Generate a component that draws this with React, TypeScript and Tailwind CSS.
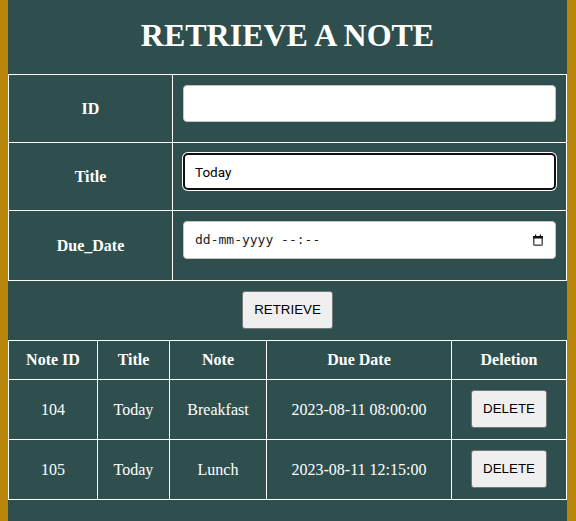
import { useState } from "react";

type Note = {
  id: number;
  title: string;
  note: string;
  dueDate: string;
};

const notes: Note[] = [
  { id: 104, title: "Today", note: "Breakfast", dueDate: "2023-08-11 08:00:00" },
  { id: 105, title: "Today", note: "Lunch", dueDate: "2023-08-11 12:15:00" },
];

const serif = "font-['Liberation_Serif','Times_New_Roman',serif]";
const sans = "font-['Liberation_Sans',Arial,sans-serif]";

const btn = `${sans} h-[38px] px-[11px] bg-[#efefef] border border-[#767676] rounded-[3px] text-[13.33px] text-black leading-none`;

const App = () => {
  const [id, setId] = useState("");
  const [title, setTitle] = useState("Today");

  return (
    <div className="min-h-screen bg-[#b8860b] pl-[8px]">
      <div className={`w-[559px] min-h-[521px] bg-[#2f4f4f] pt-[17px] text-white ${serif}`}>
        {/* Title */}
        <h1 className="h-[37px] mb-[20px] text-center text-[32px] font-bold leading-[37px]">
          RETRIEVE A NOTE
        </h1>

        {/* Form */}
        <table className="w-full table-fixed border-collapse border border-white">
          <colgroup>
            <col className="w-[164px]" />
            <col />
          </colgroup>
          <tbody>
            <tr>
              <td className="border border-white text-center font-bold text-[16px]">ID</td>
              <td className="border border-white pl-[10px] pr-[10px] pt-[10px] pb-[20px]">
                <input
                  value={id}
                  onChange={(e) => setId(e.target.value)}
                  className="block w-full h-[37px] rounded-[4px] border border-[#c4c4c4] bg-white px-[11px] text-[13.5px] text-black font-['Roboto',sans-serif] outline-none"
                />
              </td>
            </tr>
            <tr>
              <td className="border border-white text-center font-bold text-[16px]">Title</td>
              <td className="border border-white pl-[10px] pr-[10px] pt-[10px] pb-[20px]">
                <input
                  value={title}
                  onChange={(e) => setTitle(e.target.value)}
                  className="block w-full h-[37px] rounded-[5px] border-2 border-[#101010] shadow-[0_0_0_1px_white] bg-white px-[10px] text-[13.5px] text-black font-['Roboto',sans-serif] outline-none"
                />
              </td>
            </tr>
            <tr>
              <td className="border border-white text-center font-bold text-[16px]">Due_Date</td>
              <td className="border border-white pl-[10px] pr-[10px] pt-[10px] pb-[21px]">
                {/* datetime field */}
                <div className="flex items-center justify-between w-full h-[38px] rounded-[4px] border border-[#c4c4c4] bg-white pl-[11px] pr-[12px]">
                  <span className="font-['DejaVu_Sans_Mono',monospace] text-[13px] text-[#222] whitespace-pre">
                    dd-mm-yyyy --:--
                  </span>
                  <svg width="10" height="12" viewBox="0 0 10 12">
                    <rect x="0.75" y="2.75" width="8.5" height="8.5" rx="1" fill="none" stroke="#555" strokeWidth="1.5" />
                    <rect x="0" y="2" width="10" height="2.5" fill="#111" />
                    <rect x="2" y="0.5" width="1.2" height="2" fill="#111" />
                    <rect x="6.8" y="0.5" width="1.2" height="2" fill="#111" />
                  </svg>
                </div>
              </td>
            </tr>
          </tbody>
        </table>

        {/* Retrieve */}
        <div className="flex justify-center pt-[10px] pb-[11px]">
          <button className={btn}>RETRIEVE</button>
        </div>

        {/* Results */}
        <table className="w-full table-fixed border-collapse border border-white text-[16px]">
          <colgroup>
            <col className="w-[89px]" />
            <col className="w-[72px]" />
            <col className="w-[97px]" />
            <col className="w-[185px]" />
            <col />
          </colgroup>
          <thead>
            <tr>
              {["Note ID", "Title", "Note", "Due Date", "Deletion"].map((h) => (
                <th key={h} className="border border-white h-[39px] text-center font-bold">
                  {h}
                </th>
              ))}
            </tr>
          </thead>
          <tbody>
            {notes.map((n) => (
              <tr key={n.id}>
                <td className="border border-white text-center">{n.id}</td>
                <td className="border border-white text-center">{n.title}</td>
                <td className="border border-white text-center">{n.note}</td>
                <td className="border border-white text-center">{n.dueDate}</td>
                <td className="border border-white text-center pt-[10px] pb-[11px]">
                  <button className={btn}>DELETE</button>
                </td>
              </tr>
            ))}
          </tbody>
        </table>
      </div>
    </div>
  );
};

export default App;
